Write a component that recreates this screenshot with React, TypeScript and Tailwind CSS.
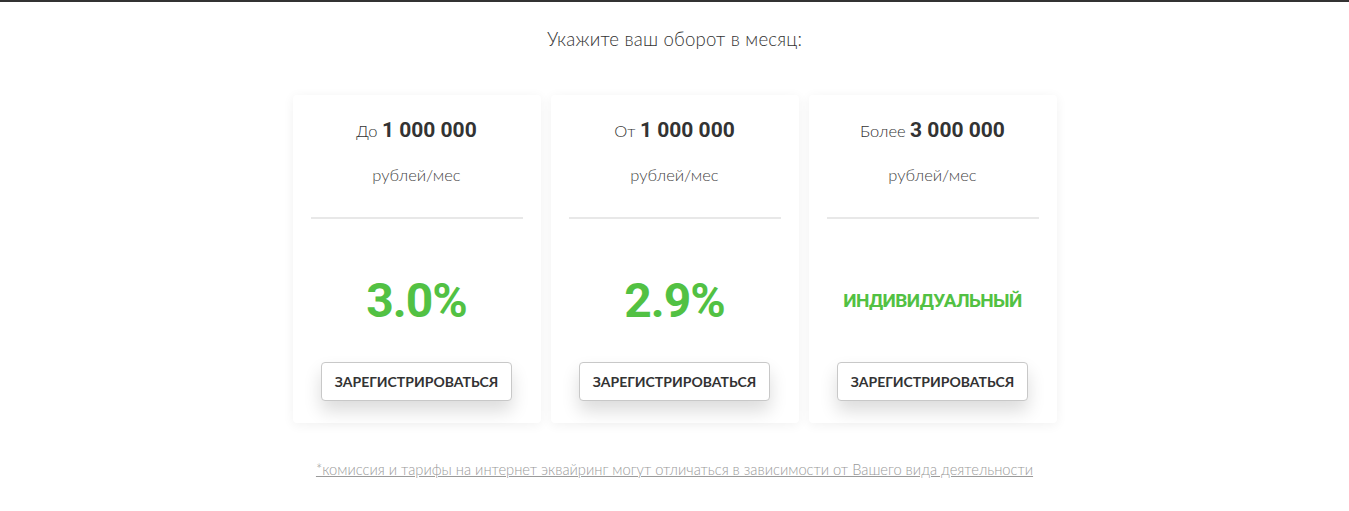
import React from 'react';

interface Plan {
  prefix: string;
  amount: string;
  rate: string;
  big: boolean;
}

const plans: Plan[] = [
  { prefix: 'До', amount: '1 000 000', rate: '3.0%', big: true },
  { prefix: 'От', amount: '1 000 000', rate: '2.9%', big: true },
  { prefix: 'Более', amount: '3 000 000', rate: 'ИНДИВИДУАЛЬНЫЙ', big: false },
];

const App: React.FC = () => {
  return (
    <div className="min-h-[511px] bg-white border-t-2 border-[#333333] font-['Lato','Open_Sans',sans-serif]">
      <h2 className="pt-[25px] text-center text-[18.6px] leading-[24px] font-light text-[#333] tracking-[0.2px]">
        Укажите ваш оборот в месяц:
      </h2>

      <div className="mx-auto mt-[44px] flex w-[764px] gap-[10px]">
        {plans.map((plan) => (
          <div
            key={plan.prefix}
            className="w-[248px] h-[328px] rounded-[4px] bg-white shadow-[0_2px_12px_rgba(0,0,0,0.06)] px-[18px] pt-[22px]"
          >
            <div className="text-center text-[#333] leading-[26px]">
              <span className="text-[16.5px] font-light">{plan.prefix} </span>
              <span className="text-[21px] font-bold font-['Roboto',sans-serif]">{plan.amount}</span>
            </div>
            <div className="mt-[20px] text-center text-[16.5px] font-light leading-[22px] text-[#444]">
              рублей/мес
            </div>
            <div className="mt-[31px] h-[2px] bg-[#e8e8e8]" />
            <div className="h-[143px] pt-[20px] flex items-center justify-center">
              {plan.big ? (
                <span className="text-[48px] font-bold font-['Roboto',sans-serif] text-[#52c143] leading-none tracking-[-1px]">
                  {plan.rate}
                </span>
              ) : (
                <span className="text-[19px] font-bold font-['Roboto',sans-serif] text-[#52c143] tracking-[-0.6px] leading-none">
                  {plan.rate}
                </span>
              )}
            </div>
            <div className="flex justify-center">
              <button className="h-[39px] w-[191px] rounded-[4px] border border-[#c8c8c8] bg-white text-[14px] font-bold text-[#333] font-['Lato',sans-serif] shadow-[0_10px_18px_rgba(0,0,0,0.14)]">
                ЗАРЕГИСТРИРОВАТЬСЯ
              </button>
            </div>
          </div>
        ))}
      </div>

      <p className="mt-[35px] text-center text-[14.7px] font-light text-[#9a9a9a]">
        <a href="#" className="underline">
          *комиссия и тарифы на интернет эквайринг могут отличаться в зависимости от Вашего вида деятельности
        </a>
      </p>
    </div>
  );
};

export default App;
